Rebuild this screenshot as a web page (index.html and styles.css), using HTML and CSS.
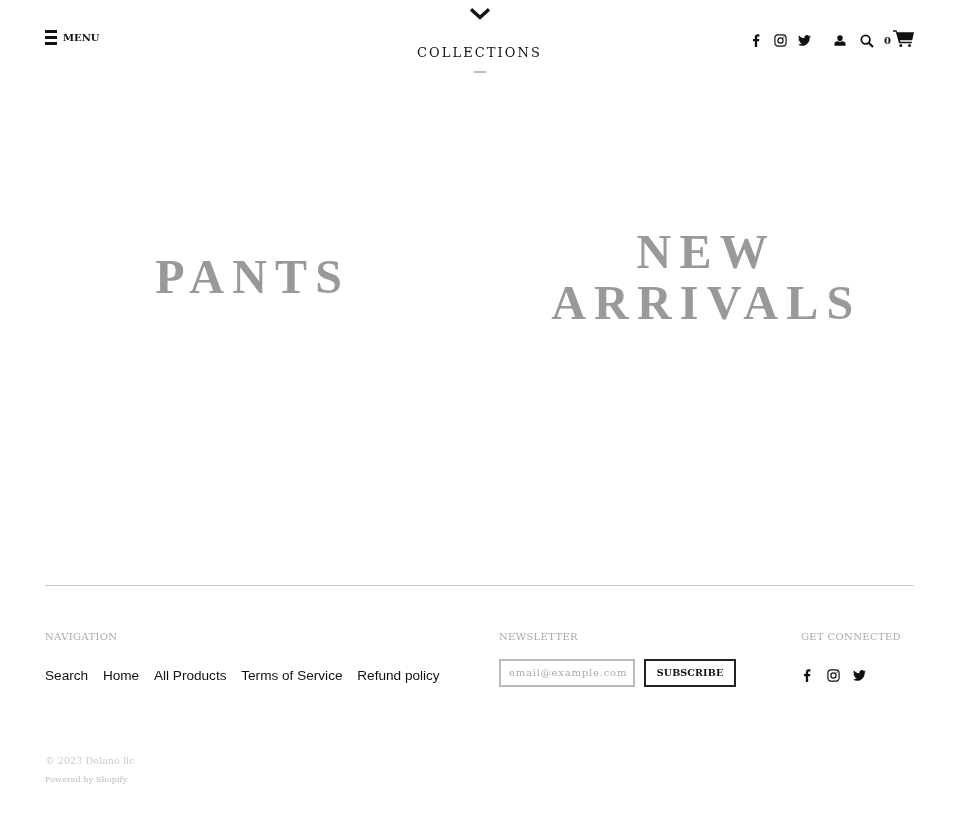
FILE: index.html
```html
<!DOCTYPE html>
<html lang="en">
<head>
    <meta charset="UTF-8">
    <title>Collections</title>
    <link rel="stylesheet" href="styles.css">
</head>
<body>
    <svg class="icon-defs" width="0" height="0">
        <symbol id="i-facebook" viewBox="0 0 12 20"><path d="M3.4 20v-9H.6V7.600h2.800V5.100C3.400 2.100 5.200.5 7.800.5c1.300 0 2.300.1 2.700.2v3.100H8.700c-1.400 0-1.700.7-1.700 1.700v2.100h3.400l-.5 3.400H7v9z"/></symbol>
        <symbol id="i-instagram" viewBox="0 0 20 20"><path fill-rule="evenodd" d="M5.800.5h8.400c2.900 0 5.300 2.400 5.300 5.300v8.400c0 2.900-2.400 5.300-5.300 5.300H5.800C2.900 19.500.5 17.100.5 14.200V5.800C.5 2.900 2.900.5 5.800.5zm0 1.800c-1.900 0-3.500 1.600-3.500 3.500v8.400c0 1.900 1.600 3.500 3.500 3.500h8.400c1.900 0 3.500-1.600 3.500-3.500V5.800c0-1.900-1.600-3.500-3.500-3.500zM10 5.100a4.900 4.900 0 1 1 0 9.800 4.900 4.900 0 0 1 0-9.800zm0 1.800a3.100 3.100 0 1 0 0 6.200 3.100 3.100 0 0 0 0-6.200zM15.200 3.700a1.100 1.100 0 1 1 0 2.200 1.100 1.100 0 0 1 0-2.200z"/></symbol>
        <symbol id="i-twitter" viewBox="0 0 24 20"><path d="M24 2.400c-.9.400-1.800.7-2.800.800 1-.6 1.800-1.600 2.200-2.700-1 .6-2 1-3.100 1.200C19.300.7 18 0 16.600 0c-2.700 0-4.900 2.200-4.900 4.900 0 .4 0 .8.100 1.100C7.700 5.800 4.100 3.900 1.700.9c-.4.700-.7 1.600-.7 2.500 0 1.700.9 3.200 2.200 4.100-.8 0-1.600-.2-2.200-.6v.1c0 2.400 1.700 4.400 3.900 4.800-.7.200-1.500.2-2.200.1.600 2 2.400 3.400 4.600 3.400-2.100 1.600-4.400 2.400-7.300 2.100C2.200 18.900 4.800 19.700 7.500 19.700c9.100 0 14-7.500 14-14v-.6c1-.7 1.800-1.600 2.500-2.700z"/></symbol>
    </svg>
    <div class="page">
        <header class="site-header">
            <a class="menu-toggle" href="#">
                <span class="burger"><i></i><i></i><i></i></span>
                <span class="menu-label">Menu</span>
            </a>
            <div class="header-title">
                <svg class="chevron" viewBox="0 0 22 13"><path d="M2 2.200l9 8.300 9-8.300" fill="none" stroke="#111" stroke-width="3.400"/></svg>
                <h1>Collections</h1>
                <span class="title-rule"></span>
            </div>
            <div class="header-tools">
                <div class="social">
                    <svg><use href="#i-facebook"/></svg>
                    <svg><use href="#i-instagram"/></svg>
                    <svg><use href="#i-twitter"/></svg>
                </div>
                <svg class="ic-user" viewBox="0 0 14 12"><path d="M7 0a3.100 3.100 0 0 1 3.100 3.300C10.100 5.200 8.800 6.800 7 6.800S3.900 5.200 3.900 3.300A3.100 3.100 0 0 1 7 0zM4.500 6.600C5.200 7.300 6 7.700 7 7.700s1.800-.4 2.500-1.100c2.300.5 4 1.600 4 3.100V12H.5V9.700c0-1.500 1.700-2.600 4-3.100z"/></svg>
                <svg class="ic-search" viewBox="0 0 15 15"><circle cx="6" cy="6" r="4.600" fill="none" stroke="#111" stroke-width="1.900"/><path d="M9.300 9.300l4.600 4.600" stroke="#111" stroke-width="2.400"/></svg>
                <span class="cart-count">0</span>
                <svg class="ic-cart" viewBox="0 0 21 17"><path d="M0 .3h3.500l.7 2H21l-1.800 8H6.900l.4 1.500h11.500v1.500H6l-3.200-11.500H0zM7.800 14a1.500 1.500 0 1 1 0 3 1.500 1.500 0 0 1 0-3zM16.500 14a1.500 1.500 0 1 1 0 3 1.500 1.500 0 0 1 0-3z"/></svg>
            </div>
        </header>

        <main class="collections">
            <a class="collection" href="#">Pants</a>
            <a class="collection" href="#">New Arrivals</a>
        </main>

        <footer class="site-footer">
            <div class="footer-cols">
                <div class="col-nav">
                    <h4>Navigation</h4>
                    <ul class="footer-links">
                        <li><a href="#">Search</a></li>
                        <li><a href="#">Home</a></li>
                        <li><a href="#">All Products</a></li>
                        <li><a href="#">Terms of Service</a></li>
                        <li><a href="#">Refund policy</a></li>
                    </ul>
                </div>
                <div class="col-news">
                    <h4>Newsletter</h4>
                    <form class="news-form">
                        <input type="email" placeholder="email@example.com">
                        <button type="button">Subscribe</button>
                    </form>
                </div>
                <div class="col-social">
                    <h4>Get Connected</h4>
                    <div class="social footer-social">
                        <svg><use href="#i-facebook"/></svg>
                        <svg><use href="#i-instagram"/></svg>
                        <svg><use href="#i-twitter"/></svg>
                    </div>
                </div>
            </div>
            <p class="copyright">&copy; 2023 Delano llc</p>
            <p class="powered">Powered by Shopify</p>
        </footer>
    </div>
</body>
</html>
```

FILE: styles.css
```css
html, body {
    margin: 0;
    background: #fff;
    color: #111;
    font-family: "DejaVu Serif", serif;
}
a {
    color: inherit;
    text-decoration: none;
}
svg {
    display: block;
    fill: #111;
}
.icon-defs {
    position: absolute;
}
.page {
    padding: 0 46px 0 45px;
    height: 831px;
    box-sizing: border-box;
    will-change: transform;
}
.site-header {
    display: grid;
    grid-template-columns: 1fr auto 1fr;
    height: 88px;
}
.menu-toggle {
    display: flex;
    align-items: center;
    align-self: start;
    gap: 6px;
    margin-top: 30px;
}
.burger {
    display: flex;
    flex-direction: column;
    justify-content: space-between;
    width: 12px;
    height: 15px;
}
.burger i {
    display: block;
    height: 3px;
    background: #111;
}
.menu-label {
    font-size: 10px;
    font-weight: bold;
    text-transform: uppercase;
}
.header-title {
    display: flex;
    flex-direction: column;
    align-items: center;
    padding-top: 7px;
}
.chevron {
    width: 22px;
    height: 13px;
}
.header-title h1 {
    margin: 25px 0 0;
    font-size: 13px;
    line-height: 15px;
    font-weight: normal;
    text-transform: uppercase;
    letter-spacing: 2.100px;
}
.title-rule {
    width: 12px;
    height: 2px;
    margin-top: 11px;
    background: #bbb;
}
.header-tools {
    display: flex;
    align-items: center;
    align-self: start;
    justify-content: flex-end;
    height: 18px;
    margin-top: 31px;
}
.social {
    display: flex;
    align-items: center;
    gap: 11px;
}
.social svg {
    width: 13px;
    height: 13px;
}
.ic-user {
    width: 12px;
    height: 11px;
    margin-left: 23px;
}
.ic-search {
    width: 14px;
    height: 14px;
    margin: 1px 0 0 14px;
}
.cart-count {
    margin-left: 10px;
    font-size: 10px;
    font-weight: bold;
}
.ic-cart {
    width: 21px;
    height: 17px;
    margin: -3px 0 0 2px;
}
.collections {
    display: grid;
    grid-template-columns: 1fr 1fr;
    gap: 38px;
    align-items: center;
    height: 498px;
    border-bottom: 1px solid #ccc;
    box-sizing: border-box;
    padding-bottom: 120px;
}
.collection {
    font-family: "Liberation Serif", serif;
    font-size: 48px;
    line-height: 51px;
    font-weight: bold;
    letter-spacing: 8.200px;
    text-transform: uppercase;
    text-align: center;
    color: #999;
}
.site-footer {
    padding-top: 44px;
}
.footer-cols {
    display: flex;
}
.col-nav { width: 454px; }
.col-news { width: 302px; }
.site-footer h4 {
    margin: 0;
    font-size: 10px;
    line-height: 14px;
    font-weight: normal;
    text-transform: uppercase;
    letter-spacing: 0.350px;
    color: #aaa;
}
.footer-links {
    display: flex;
    gap: 14.800px;
    margin: 20px 0 0;
    padding: 0;
    list-style: none;
    font-family: "Liberation Sans", sans-serif;
    font-size: 13.600px;
    line-height: 24px;
}
.news-form {
    display: flex;
    gap: 9px;
    margin-top: 15px;
}
.news-form input {
    width: 136px;
    height: 28px;
    box-sizing: border-box;
    padding: 0 6px 2px 8px;
    border: 2px solid #bbb;
    background: #fff;
    font-family: "DejaVu Serif", serif;
    font-size: 10px;
    letter-spacing: 0.800px;
}
.news-form input::placeholder {
    color: #aaa;
}
.news-form button {
    width: 92px;
    height: 28px;
    padding: 0 0 2px;
    border: 2px solid #222;
    background: #fff;
    color: #111;
    font-family: "DejaVu Serif", serif;
    font-size: 9.500px;
    font-weight: bold;
    text-transform: uppercase;
    letter-spacing: 0.150px;
}
.footer-social {
    gap: 13px;
    margin-top: 25px;
}
.copyright {
    margin: 66px 0 0;
    font-size: 9.700px;
    line-height: 14px;
    color: #ccc;
}
.powered {
    margin: 6px 0 0;
    font-size: 8px;
    line-height: 12px;
    letter-spacing: 0.100px;
    color: #bbb;
}
```
